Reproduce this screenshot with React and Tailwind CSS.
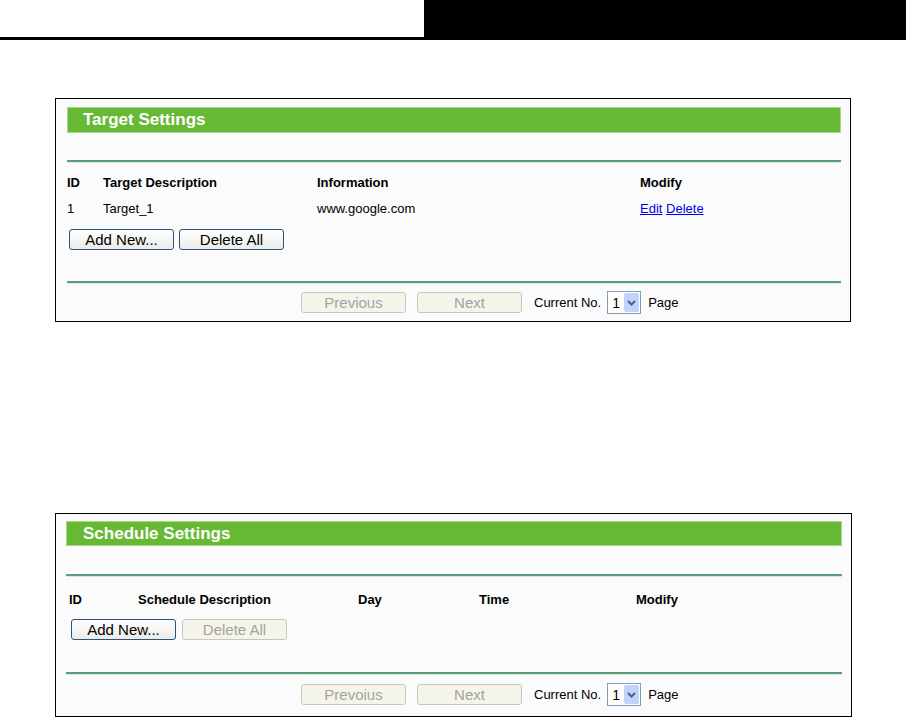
import React from "react";

const font = { fontFamily: '"Liberation Sans", Arial, sans-serif' };

function Btn({ children, disabled, className = "" }) {
  return (
    <div
      className={
        "flex h-[21px] w-[105px] items-center justify-center rounded-[3px] border text-[15px] leading-none " +
        (disabled
          ? "border-[#c9c7ba] bg-[#f5f4ea] text-[#a3a3a3] "
          : "border-[#2a5380] bg-gradient-to-b from-white to-[#ecebe6] text-black ") +
        className
      }
    >
      {children}
    </div>
  );
}

function Select() {
  return (
    <div className="flex h-[23px] w-[34px] items-center border border-[#7f9db9] bg-white pl-[4px]">
      <span className="flex-1 text-[14px] leading-none text-black">1</span>
      <div className="mr-[1px] flex h-[19px] w-[15px] items-center justify-center rounded-[2px] bg-[#c1d3fb]">
        <svg width="9" height="6" viewBox="0 0 9 6">
          <path d="M1 1 L4.5 4.5 L8 1" stroke="#4d6185" strokeWidth="2" fill="none" />
        </svg>
      </div>
    </div>
  );
}

function Line({ className = "" }) {
  return (
    <div className={"flex flex-col " + className}>
      <div className="h-[2px] bg-[#5b9e79]" />
      <div className="h-[1px] bg-[#d6eadf]" />
    </div>
  );
}

function Pager({ prev, ml }) {
  return (
    <div className={"flex h-[23px] items-center " + ml}>
      <Btn disabled>{prev}</Btn>
      <Btn disabled className="ml-[11px]">Next</Btn>
      <span className="ml-[12px] text-[13px] text-black">Current No.</span>
      <div className="ml-[6px]">
        <Select />
      </div>
      <span className="ml-[7px] text-[13px] text-black">Page</span>
    </div>
  );
}

export default function App() {
  return (
    <div className="min-h-[718px] w-[906px] bg-white" style={font}>
      {/* top bar */}
      <div className="flex h-[40px]">
        <div className="w-[424px] border-b-[3px] border-black" />
        <div className="flex-1 bg-black" />
      </div>

      {/* Target Settings */}
      <div className="ml-[55px] mt-[58px] w-[796px] border border-black bg-[#fbfbfb] pb-[7px] pl-[11px] pr-[9px] pt-[8px]">
        <div className="flex h-[26px] items-center border border-[#a8d68c] bg-[#67b834] pl-[15px] text-[17px] font-bold text-white">
          Target Settings
        </div>
        <Line className="mt-[27px]" />
        <div className="mt-[7px] grid h-[26px] grid-cols-[36px_214px_323px_1fr] items-center text-[13px] font-bold text-black">
          <span>ID</span>
          <span>Target Description</span>
          <span>Information</span>
          <span>Modify</span>
        </div>
        <div className="grid h-[26px] grid-cols-[36px_214px_323px_1fr] items-center text-[13px] text-black">
          <span>1</span>
          <span>Target_1</span>
          <span>www.google.com</span>
          <span className="text-[#0000ee]">
            <span className="underline">Edit</span> <span className="underline">Delete</span>
          </span>
        </div>
        <div className="ml-[2px] mt-[7px] flex gap-[5px]">
          <Btn>Add New...</Btn>
          <Btn>Delete All</Btn>
        </div>
        <Line className="mt-[31px]" />
        <Pager prev="Previous" ml="ml-[234px] mt-[7px]" />
      </div>

      {/* Schedule Settings */}
      <div className="ml-[55px] mt-[191px] w-[797px] border border-black bg-[#fbfbfb] pb-[10px] pl-[10px] pr-[9px] pt-[7px]">
        <div className="flex h-[25px] items-center border border-[#a8d68c] bg-[#67b834] pl-[16px] text-[17px] font-bold text-white">
          Schedule Settings
        </div>
        <Line className="mt-[28px]" />
        <div className="mt-[10px] grid h-[26px] grid-cols-[69px_220px_121px_157px_1fr] items-center pl-[3px] text-[13px] font-bold text-black">
          <span>ID</span>
          <span>Schedule Description</span>
          <span>Day</span>
          <span>Time</span>
          <span>Modify</span>
        </div>
        <div className="ml-[5px] mt-[6px] flex gap-[6px]">
          <Btn>Add New...</Btn>
          <Btn disabled>Delete All</Btn>
        </div>
        <Line className="mt-[32px]" />
        <Pager prev="Prevoius" ml="ml-[235px] mt-[8px]" />
      </div>
    </div>
  );
}
